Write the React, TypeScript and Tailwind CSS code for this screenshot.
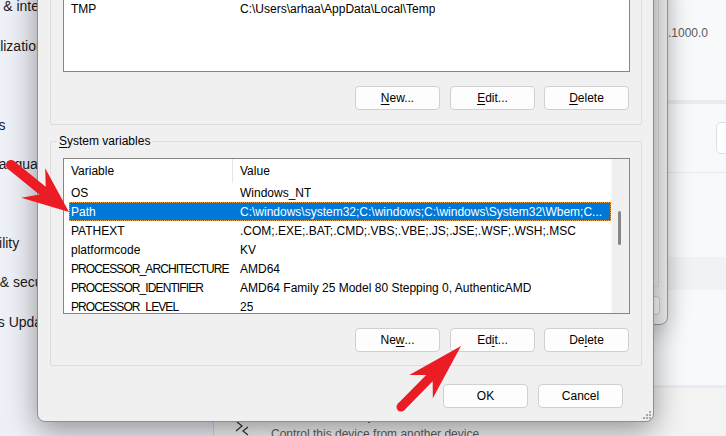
type Row = { name: string; value: string; selected?: boolean; tight?: boolean }

const navItems = [
  { label: 'System', pad: 'pl-[28px]' },
  { label: 'Bluetooth & devices', pad: 'pl-[28px]' },
  { label: 'Network & internet', pad: 'pl-[28px]' },
  { label: 'Personalization', pad: 'pl-[28px]' },
  { label: 'Apps', pad: 'pl-[28px]' },
  { label: 'Accounts', pad: 'pl-[28px]' },
  { label: 'Time & language', pad: 'pl-[28px]' },
  { label: 'Gaming', pad: 'pl-[28px]' },
  { label: 'Accessibility', pad: 'pl-[23px]' },
  { label: 'Privacy & security', pad: 'pl-[30px]' },
  { label: 'Windows Update', pad: 'pl-[28px]' },
]

const userRows: Row[] = [
  { name: 'OneDrive', value: 'C:\\Users\\arhaa\\OneDrive' },
  { name: 'OneDriveConsumer', value: 'C:\\Users\\arhaa\\OneDrive' },
  { name: 'Path', value: 'C:\\Users\\arhaa\\AppData\\Local\\Microsoft\\WindowsApps;' },
  { name: 'TEMP', value: 'C:\\Users\\arhaa\\AppData\\Local\\Temp' },
  { name: 'TMP', value: 'C:\\Users\\arhaa\\AppData\\Local\\Temp' },
]

const systemRows: Row[] = [
  { name: 'OS', value: 'Windows_NT' },
  { name: 'Path', value: 'C:\\windows\\system32;C:\\windows;C:\\windows\\System32\\Wbem;C...', selected: true },
  { name: 'PATHEXT', value: '.COM;.EXE;.BAT;.CMD;.VBS;.VBE;.JS;.JSE;.WSF;.WSH;.MSC' },
  { name: 'platformcode', value: 'KV' },
  { name: 'PROCESSOR_ARCHITECTURE', value: 'AMD64', tight: true },
  { name: 'PROCESSOR_IDENTIFIER', value: 'AMD64 Family 25 Model 80 Stepping 0, AuthenticAMD', tight: true },
  { name: 'PROCESSOR_LEVEL', value: '25', tight: true },
  { name: 'PROCESSOR_REVISION', value: '5000', tight: true },
]

function Btn({ children, className = '' }: { children: React.ReactNode; className?: string }) {
  return (
    <button
      className={`w-[85px] h-[24px] flex items-center justify-center bg-[#fdfdfd] border border-[#d0d0d0] rounded-[4px] text-[12px] leading-none text-black ${className}`}
    >
      {children}
    </button>
  )
}

function U({ children }: { children: React.ReactNode }) {
  return <span className="underline underline-offset-[2px]">{children}</span>
}

function VarList({ rows, height, scrollbar }: { rows: Row[]; height: string; scrollbar?: boolean }) {
  return (
    <div className={`${height} ml-[12px] mr-[11px] border border-[#858585] bg-white flex overflow-hidden text-[12px] text-black`}>
      <div className="flex-1 min-w-0 flex flex-col">
        <div className="h-[24px] shrink-0 flex items-center">
          <div className="w-[169px] h-full pl-[7px] flex items-center border-r border-[#e5e5e5]">Variable</div>
          <div className="pl-[7px]">Value</div>
        </div>
        {rows.map((r) => (
          <div
            key={r.name}
            className={`h-[19px] shrink-0 ml-[5px] flex items-center whitespace-nowrap ${
              r.selected ? 'bg-[#0078d7] text-white outline-1 outline-dotted outline-[#f0a24a] -outline-offset-1' : ''
            }`}
          >
            <div className={`w-[163px] pl-[2px] shrink-0 overflow-hidden ${r.tight ? 'tracking-[-0.9px]' : ''}`}>{r.name}</div>
            <div className="pl-[8px] overflow-hidden">{r.value}</div>
          </div>
        ))}
      </div>
      {scrollbar && (
        <div className="w-[18px] shrink-0 bg-[#f0f0f0] border-l border-[#fafafa]">
          <div className="ml-[6px] mt-[52px] w-[3px] h-[34px] rounded-full bg-[#868686]" />
        </div>
      )}
    </div>
  )
}

function EnvDialog() {
  return (
    <div className="absolute left-[37px] bottom-[14px] w-[617px] bg-[#f0f0f0] border border-[#8e8e8e] rounded-b-[8px] shadow-[0_8px_30px_rgba(0,0,0,0.4)] flex flex-col">
      <fieldset className="mt-[9px] ml-[12px] mr-[11px] border border-[#dcdcdc] rounded-[2px] pb-[14px]">
        <legend className="ml-[6px] px-[2px] text-[12px] leading-[14px]">
          <U>U</U>ser variables for arhaa
        </legend>
        <div className="mt-[10px]">
          <VarList rows={userRows} height="h-[174px]" />
        </div>
        <div className="mt-[14px] mr-[12px] flex justify-end gap-[9px]">
          <Btn className="mr-[1px]">
            <U>N</U>ew...
          </Btn>
          <Btn>
            <U>E</U>dit...
          </Btn>
          <Btn>
            <U>D</U>elete
          </Btn>
        </div>
      </fieldset>

      <fieldset className="mt-[9px] ml-[12px] mr-[11px] border border-[#dcdcdc] rounded-[2px] pb-[13px]">
        <legend className="ml-[6px] px-[2px] text-[12px] leading-[14px] text-black">
          <U>S</U>ystem variables
        </legend>
        <div className="mt-[10px]">
          <VarList rows={systemRows} height="h-[156px]" scrollbar />
        </div>
        <div className="mt-[14px] mr-[12px] flex justify-end gap-[9px]">
          <Btn className="mr-[1px]">
            Ne<U>w</U>...
          </Btn>
          <Btn>
            Ed<U>i</U>t...
          </Btn>
          <Btn>
            De<U>l</U>ete
          </Btn>
        </div>
      </fieldset>

      <div className="mt-[18px] mb-[13px] pr-[30px] flex justify-end gap-[10px]">
        <Btn className="border-[#0067c0]">OK</Btn>
        <Btn>Cancel</Btn>
      </div>

      <svg className="absolute right-[2px] bottom-[2px]" width="9" height="9" viewBox="0 0 9 9">
        <g fill="#a8a8a8">
          <rect x="7" y="1" width="2" height="2" />
          <rect x="4" y="4" width="2" height="2" />
          <rect x="7" y="4" width="2" height="2" />
          <rect x="1" y="7" width="2" height="2" />
          <rect x="4" y="7" width="2" height="2" />
          <rect x="7" y="7" width="2" height="2" />
        </g>
      </svg>
    </div>
  )
}

function SystemProperties() {
  return (
    <div className="absolute left-[300px] top-[-20px] w-[368px] h-[345px] bg-[#f0f0f0] border border-[#9a9a9a] rounded-b-[8px] shadow-[0_6px_24px_rgba(0,0,0,0.22)] flex flex-col pr-[7px] pb-[9px]">
      <div className="flex-1 mr-[1px] mb-[9px] border-r border-b border-[#dcdcdc]" />
      <div className="flex justify-end">
        <button className="w-[120px] h-[19px] bg-[#fdfdfd] border border-[#d0d0d0] rounded-[4px]" />
      </div>
    </div>
  )
}

function SettingsBackground() {
  return (
    <div className="absolute inset-0 flex">
      <div className="-ml-[80px] w-[293px] shrink-0 bg-[#eef0f7] overflow-hidden">
        <div className="-mt-[91.5px] flex flex-col">
          {navItems.map((n) => (
            <div key={n.label} className={`h-[39.4px] ${n.pad} flex items-center text-[14px] text-[#1b1b1b] whitespace-nowrap`}>
              {n.label}
            </div>
          ))}
        </div>
      </div>
      <div className="flex-1 flex flex-col bg-[#f8f9fb] text-[#5c5c5c]">
        <div className="h-[100px] flex justify-end pr-[18px] pt-[25px] text-[12px] leading-[16px]">
          Windows Feature Experience Pack 1000.22638.1000.0
        </div>
        <div className="h-[4px] bg-[#e8ebf1]" />
        <div className="h-[68px] flex justify-end items-center">
          <div className="w-[64px] h-[32px] -mr-[54px] bg-white border border-[#e0e0e0] rounded-[5px]" />
        </div>
        <div className="h-px bg-[#e7e8ec]" />
        <div className="h-[84px]" />
        <div className="h-[33px] bg-[#f1f2f5]" />
        <div className="h-[95px]" />
        <div className="h-[3px] bg-[#e8ebf1]" />
        <div className="flex-1 bg-[#f3f3f3] border-l border-[#d6d6d6] flex items-end pl-[20px]">
          <svg width="16" height="20" viewBox="0 0 16 20" className="mb-[-2px]" fill="none" stroke="#303030" strokeWidth="1.2">
            <path d="M2 3 L8 8 L2 13" />
            <path d="M14 9 L9 13 L14 17" />
          </svg>
          <div className="ml-[21px] flex flex-col mb-[-6px]">
            <span className="text-[14px] text-[#1b1b1b]">Remote Desktop</span>
            <span className="text-[12px] leading-[16px] text-[#5d5d5d]">Control this device from another device</span>
          </div>
        </div>
      </div>
    </div>
  )
}

function arrowPoints(
  tail: [number, number],
  tip: [number, number],
  headLen: number,
  headHalf: number,
  notch: number,
  shaftHalf: number,
) {
  const dx = tip[0] - tail[0]
  const dy = tip[1] - tail[1]
  const len = Math.hypot(dx, dy)
  const ux = dx / len
  const uy = dy / len
  const nx = -uy
  const ny = ux
  const p = (along: number, side: number) =>
    `${(tip[0] - ux * along + nx * side).toFixed(1)},${(tip[1] - uy * along + ny * side).toFixed(1)}`
  return [
    p(0, 0),
    p(headLen, headHalf),
    p(headLen - notch, shaftHalf),
    p(len, shaftHalf),
    p(len, -shaftHalf),
    p(headLen - notch, -shaftHalf),
    p(headLen, -headHalf),
  ].join(' ')
}

function Arrows() {
  const a1 = { tail: [11, 165] as [number, number], tip: [69, 212] as [number, number] }
  const a2 = { tail: [401, 407] as [number, number], tip: [461, 346] as [number, number] }
  return (
    <svg className="absolute inset-0 pointer-events-none" width="726" height="436" viewBox="0 0 726 436">
      <g fill="#ec1c24">
        <polygon points={arrowPoints(a1.tail, a1.tip, 46, 19, 12, 5)} />
        <circle cx={a1.tail[0]} cy={a1.tail[1]} r="5" />
        <polygon points={arrowPoints(a2.tail, a2.tip, 57, 16.5, 12, 4.5)} />
        <circle cx={a2.tail[0]} cy={a2.tail[1]} r="4.5" />
      </g>
    </svg>
  )
}

export default function App() {
  return (
    <div className="relative w-[726px] h-[436px] overflow-hidden font-['Liberation_Sans',Arial,sans-serif]">
      <SettingsBackground />
      <SystemProperties />
      <EnvDialog />
      <Arrows />
    </div>
  )
}
